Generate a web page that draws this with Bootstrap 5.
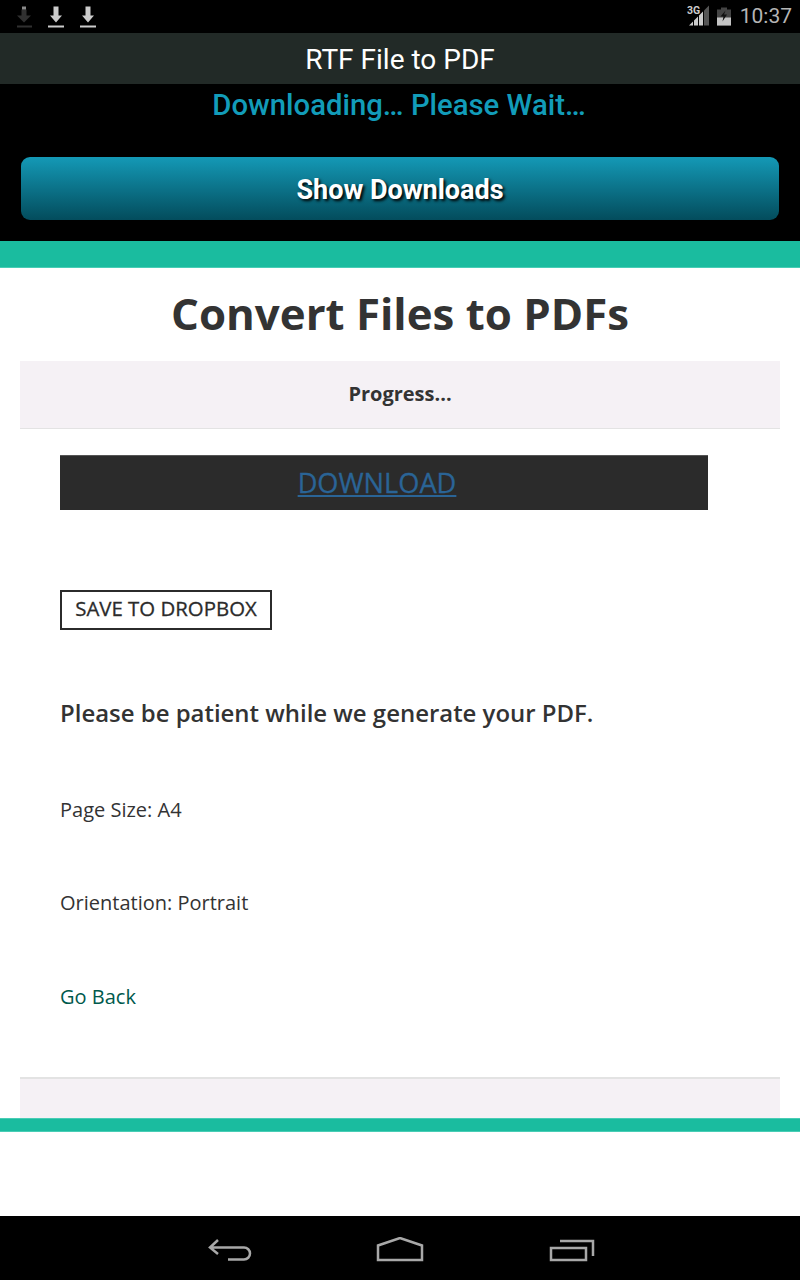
<!DOCTYPE html>
<html lang="en">
<head>
    <meta charset="UTF-8">
    <meta name="viewport" content="width=device-width, initial-scale=1.0">
    <title>RTF File to PDF</title>
    <link href="https://cdn.jsdelivr.net/npm/bootstrap@5.3.3/dist/css/bootstrap.min.css" rel="stylesheet">
    <style>
        body {
            background-color: #fff;
            width: 800px;
            height: 1280px;
            overflow: hidden;
            font-family: "Open Sans", sans-serif;
            color: #333;
        }
        .app-frame { height: 1280px; }
        .status-bar { height: 33px; background-color: #000; padding: 0 8px 0 12px; }
        .status-time { font-family: Roboto, sans-serif; font-size: 21px; color: #b5b5b5; line-height: 33px; margin-left: 9px; }
        .title-bar { height: 51px; background-color: #222a27; color: #fff; font-family: Roboto, sans-serif; font-size: 28px; line-height: 54px; text-align: center; }
        .promo { height: 157px; background-color: #000; padding: 0 21px; }
        .promo-text { font-family: Roboto, sans-serif; font-weight: 500; font-size: 29.300px; line-height: 42px; color: #129cb9; text-align: center; margin-bottom: 31px; padding-right: 2px; }
        .promo-btn {
            display: block; width: 100%; height: 63px; padding: 0; border: 0; border-radius: 9px;
            background: linear-gradient(#1499b6, #034c5c);
            color: #fff; font-family: Roboto, sans-serif; font-weight: 700; font-size: 27px; line-height: 66px;
            text-shadow: 2px 2px 3px #000;
        }
        .teal-top { height: 27px; background-color: #1abc9f; border-bottom: 1px solid #48cdb5; }
        .page-title { font-size: 43.800px; font-weight: 700; line-height: 60px; text-align: center; margin: 15px 0 18px; color: #333; }
        .panel-box { margin: 0 20px; height: 716px; }
        .panel-head { height: 68px; background-color: #f5f1f5; border-bottom: 1px solid #e3e3e3; font-size: 20px; font-weight: 700; line-height: 66px; text-align: center; }
        .panel-main { height: 648px; padding: 26px 40px 0; }
        .dl-bar { width: 648px; height: 55px; background-color: #2b2b2b; border-top: 1px solid #555; padding-right: 14px; text-align: center; font-size: 27.200px; line-height: 53px; margin-bottom: 80px; -webkit-text-stroke: .3px #2a6496; }
        .dl-bar a { color: #2a6496; }
        .dropbox-btn { display: block; width: 212px; height: 40px; padding: 0 0 3px; border: 2px solid #2b2b2b; border-radius: 0; background: #fff; color: #2b2b2b; font-size: 20.400px; line-height: 33px; margin-bottom: 65px; -webkit-text-stroke: .3px #2b2b2b; }
        .patient { font-size: 23.950px; font-weight: 600; line-height: 35px; margin-bottom: 63.500px; }
        .info-line { font-size: 20px; line-height: 32px; margin-bottom: 61.500px; }
        .go-back { color: #00594c; text-decoration: none; }
        .panel-foot { height: 41px; background-color: #f5f1f5; border-top: 2px solid #e3e3e3; }
        .teal-bottom { height: 14px; background-color: #1abc9f; border-top: 1px solid #48cdb5; border-bottom: 1px solid #48cdb5; }
        .blank-gap { height: 84px; background-color: #fff; }
        .nav-keys { height: 64px; background-color: #000; padding: 3px 0 0 3.500px; gap: 124px; }
        .nav-recents { margin-left: 1px; }
    </style>
</head>
<body>
    <div class="app-frame d-flex flex-column">
        <div class="status-bar d-flex align-items-center justify-content-between">
            <div class="d-flex" style="gap:8px">
                <svg width="24" height="24" viewBox="0 0 24 24"><path d="M9.500 4.500h5V10.500H19l-7 7-7-7h4.500z" fill="#303030"/><path d="M10 1.500h4v3h-4z" fill="#8a8a8a"/><path d="M5 20.500h15v2H5z" fill="#303030"/></svg>
                <svg width="24" height="24" viewBox="0 0 24 24"><path d="M9.500 1.500h5V10.500H18l-6 7-6-7h3.500z" fill="#ccc"/><path d="M4 20.500h16v2H4z" fill="#ccc"/></svg>
                <svg width="24" height="24" viewBox="0 0 24 24"><path d="M9.500 1.500h5V10.500H18l-6 7-6-7h3.500z" fill="#ccc"/><path d="M4 20.500h16v2H4z" fill="#ccc"/></svg>
            </div>
            <div class="d-flex align-items-center">
                <svg width="24" height="24" viewBox="0 0 24 24">
                    <path d="M4 20.500 8 16.500V20.500zM9 15.500 13 11.500V20.500H9zM14 10.500 18 6.500V20.500H14z" fill="#ccc"/>
                    <path d="M19 5.500 24 .5V20.500H19z" fill="#555"/>
                    <text x="2" y="8.500" font-family="Roboto, sans-serif" font-size="10.500" font-weight="700" fill="#ccc">3G</text>
                </svg>
                <svg class="ms-2" width="14" height="24" viewBox="0 0 14 24">
                    <path d="M4 2.500h6v2h4v16H0v-16h4z" fill="#444"/>
                    <path d="M0 12.500h14v8H0z" fill="#c4c4c4"/>
                    <path d="M8.500 5.500 3.500 11.500h3l-1 5 4.500-7H7z" fill="#111"/>
                </svg>
                <span class="status-time">10:37</span>
            </div>
        </div>
        <div class="title-bar">RTF File to PDF</div>
        <div class="promo">
            <div class="promo-text">Downloading… Please Wait…</div>
            <button type="button" class="btn promo-btn">Show Downloads</button>
        </div>
        <div class="teal-top"></div>
        <h1 class="page-title">Convert Files to PDFs</h1>
        <div class="panel-box">
            <div class="panel-head">Progress...</div>
            <div class="panel-main">
                <div class="dl-bar"><a href="#">DOWNLOAD</a></div>
                <button type="button" class="btn dropbox-btn">SAVE TO DROPBOX</button>
                <p class="patient">Please be patient while we generate your PDF.</p>
                <p class="info-line">Page Size: A4</p>
                <p class="info-line">Orientation: Portrait</p>
                <p class="info-line"><a class="go-back" href="#">Go Back</a></p>
            </div>
        </div>
        <div class="panel-box panel-foot"></div>
        <div class="teal-bottom"></div>
        <div class="blank-gap"></div>
        <div class="nav-keys d-flex align-items-center justify-content-center">
            <svg width="44" height="26" viewBox="0 0 44 26" fill="none" stroke="#a8a8a8" stroke-width="2.500"><path d="M10 3 2 10.500 10 17M2 10.500h34a6 6 0 0 1 0 12H20"/></svg>
            <svg width="48" height="26" viewBox="0 0 48 26" fill="none" stroke="#a8a8a8" stroke-width="2.500"><path d="M2 23V8.500L24 1l22 7.500V23z"/></svg>
            <svg class="nav-recents" width="46" height="24" viewBox="0 0 46 24" fill="none" stroke="#a8a8a8" stroke-width="2.500"><path d="M2 10h35v12H2zM11 3h33v15"/></svg>
        </div>
    </div>

    <script src="https://cdn.jsdelivr.net/npm/bootstrap@5.3.3/dist/js/bootstrap.bundle.min.js"></script>
</body>
</html>
